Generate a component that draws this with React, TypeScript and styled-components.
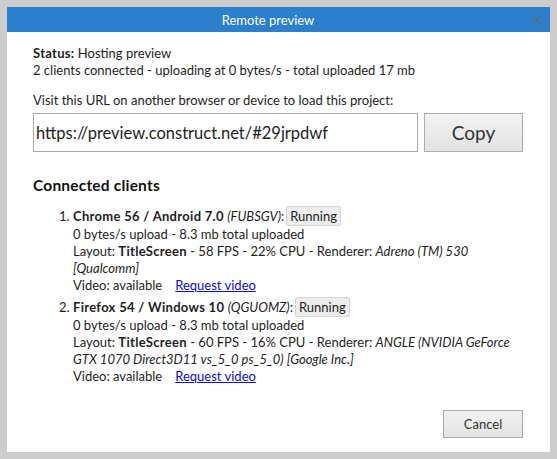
import React from "react";
import styled, { createGlobalStyle } from "styled-components";

const GlobalStyle = createGlobalStyle`
  html, body {
    margin: 0;
    padding: 0;
    background: #cdcdcd;
  }
  body {
    font-family: Lato, "Noto Sans", sans-serif;
    color: #1e1e1e;
  }
  b {
    letter-spacing: 0.3px;
  }
`;

const Page = styled.div`
  width: 557px;
  height: 459px;
  box-sizing: border-box;
  padding: 7px;
`;

const Dialog = styled.div`
  width: 543px;
  height: 445px;
  background: #fff;
  display: flex;
  flex-direction: column;
`;

const TitleBar = styled.div`
  position: relative;
  height: 25px;
  flex: none;
  box-sizing: border-box;
  padding-right: 21px;
  background: #2b7fcd;
  color: #fff;
  display: flex;
  align-items: center;
  justify-content: center;
  font-size: 13px;
`;

const CloseButton = styled.button`
  position: absolute;
  right: 6px;
  top: 6px;
  width: 14px;
  height: 14px;
  padding: 0;
  border: 0;
  background: transparent;
  display: flex;
  align-items: center;
  justify-content: center;
`;

const Body = styled.div`
  flex: 1;
  padding: 13px 27px 0 26px;
  font-size: 13px;
  line-height: 17px;
`;

const Line = styled.div``;

const Gap = styled.div<{ $h: number }>`
  height: ${(p) => p.$h}px;
`;

const UrlRow = styled.div`
  display: flex;
  gap: 6px;
  margin-top: 4px;
`;

const UrlInput = styled.input`
  width: 385px;
  height: 39px;
  box-sizing: border-box;
  border: 1px solid #a9a9a9;
  padding: 0 2px;
  font-family: Lato, "Noto Sans", sans-serif;
  font-size: 16.5px;
  color: #1e1e1e;
  outline: none;
`;

const Button = styled.button<{ $w: number; $h: number; $size: number }>`
  width: ${(p) => p.$w}px;
  height: ${(p) => p.$h}px;
  box-sizing: border-box;
  border: 1px solid #adadad;
  background: linear-gradient(#f2f2f2, #e3e3e3);
  font-family: Lato, "Noto Sans", sans-serif;
  font-size: ${(p) => p.$size}px;
  color: #333;
  padding: 0;
`;

const Heading = styled.div`
  margin-top: 23px;
  font-weight: bold;
  font-size: 15.5px;
  letter-spacing: 0.2px;
  line-height: 20px;
  color: #111;
`;

const ClientList = styled.ol`
  margin: 11px 0 0 0;
  padding-left: 40px;
`;

const Client = styled.li`
  margin-bottom: 3px;
`;

const FirstLine = styled.div`
  line-height: 20px;
`;

const Badge = styled.span`
  display: inline-block;
  vertical-align: top;
  height: 20px;
  line-height: 19px;
  box-sizing: border-box;
  padding: 0 3px;
  margin-left: 2px;
  background: #ededed;
  border: 1px solid #d6d6d6;
  border-radius: 2px;
`;

const Link = styled.a`
  color: #0b0bdd;
  text-decoration: underline;
  margin-left: 13px;
  cursor: pointer;
`;

const Footer = styled.div`
  flex: none;
  display: flex;
  justify-content: flex-end;
  padding: 0 27px 14px 0;
`;

type ClientInfo = {
  name: string;
  code: string;
  fps: number;
  cpu: number;
  renderer: string;
};

const clients: ClientInfo[] = [
  {
    name: "Chrome 56 / Android 7.0",
    code: "FUBSGV",
    fps: 58,
    cpu: 22,
    renderer: "Adreno (TM) 530 [Qualcomm]",
  },
  {
    name: "Firefox 54 / Windows 10",
    code: "QGUOMZ",
    fps: 60,
    cpu: 16,
    renderer: "ANGLE (NVIDIA GeForce GTX 1070 Direct3D11 vs_5_0 ps_5_0) [Google Inc.]",
  },
];

export default function App() {
  return (
    <Page>
      <GlobalStyle />
      <Dialog>
        <TitleBar>
          Remote preview
          <CloseButton aria-label="Close">
            <svg width="10" height="10" viewBox="0 0 10 10">
              <path d="M0.5 0.5L9.5 9.5M9.5 0.5L0.5 9.5" stroke="#5f6d7a" strokeWidth="1.3" />
            </svg>
          </CloseButton>
        </TitleBar>
        <Body>
          <Line>
            <b>Status:</b> Hosting preview
          </Line>
          <Line>2 clients connected - uploading at 0 bytes/s - total uploaded 17 mb</Line>
          <Gap $h={13} />
          <Line>Visit this URL on another browser or device to load this project:</Line>
          <UrlRow>
            <UrlInput readOnly value="https://preview.construct.net/#29jrpdwf" />
            <Button $w={99} $h={39} $size={19}>
              Copy
            </Button>
          </UrlRow>
          <Heading>Connected clients</Heading>
          <ClientList>
            {clients.map((c) => (
              <Client key={c.code}>
                <FirstLine>
                  <b>{c.name}</b> <i>({c.code})</i>:<Badge>Running</Badge>
                </FirstLine>
                <Line>0 bytes/s upload - 8.3 mb total uploaded</Line>
                <Line>
                  Layout: <b>TitleScreen</b> - {c.fps} FPS - {c.cpu}% CPU - Renderer:{" "}
                  <i>{c.renderer}</i>
                </Line>
                <Line>
                  Video: available<Link>Request video</Link>
                </Line>
              </Client>
            ))}
          </ClientList>
        </Body>
        <Footer>
          <Button $w={80} $h={28} $size={13}>
            Cancel
          </Button>
        </Footer>
      </Dialog>
    </Page>
  );
}
